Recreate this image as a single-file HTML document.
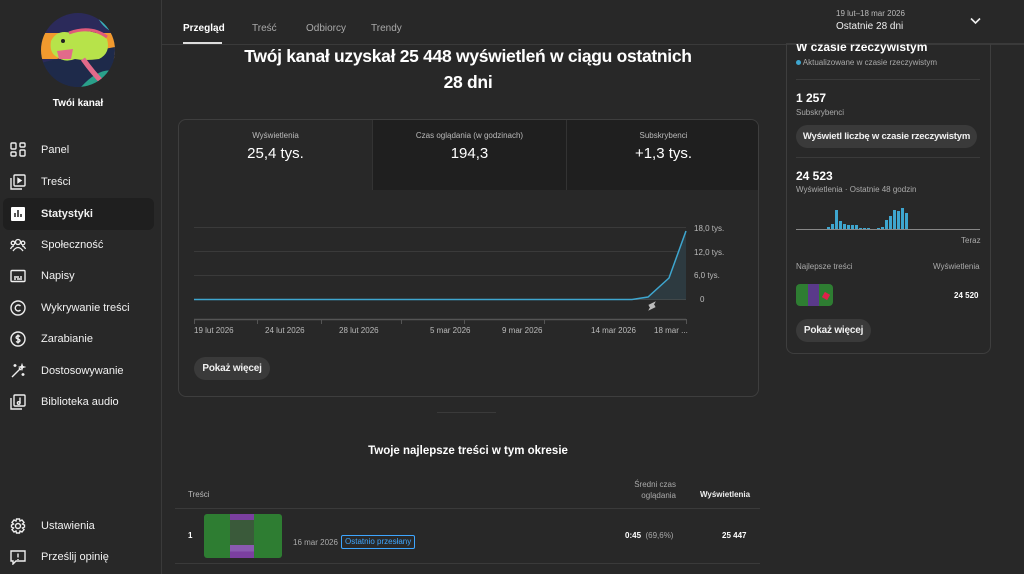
<!DOCTYPE html><html><head><meta charset="utf-8"><style>
*{margin:0;padding:0;box-sizing:border-box}
body{width:1024px;height:574px;background:#282828;font-family:"Liberation Sans",sans-serif;color:#fff;position:relative;overflow:hidden}
.a{position:absolute}
.side{left:0;top:0;width:162px;height:574px;border-right:1px solid #3a3a3a}
.nav{position:absolute;left:0;width:162px;height:32px;font-size:11px;color:#f1f1f1;display:flex;align-items:center}
.nav svg{position:absolute;left:10px;top:8px}
.nav span{position:absolute;left:41px;top:10px}
.sel{left:3px!important;width:151px!important;background:#1f1f1f;border-radius:6px}
.sel svg{left:7px}.sel span{left:38px;font-weight:bold}
.t{font-size:10px;color:#aaa}
.btn{background:#3a3a3a;border-radius:12px;font-size:10px;font-weight:bold;color:#f1f1f1;text-align:center;line-height:23px;height:23px;white-space:nowrap;letter-spacing:-0.2px}
</style></head><body>
<div class="a side">
<svg class="a" style="left:41px;top:13px" width="74" height="74" viewBox="0 0 74 74"><defs><clipPath id="c"><circle cx="37" cy="37" r="37"/></clipPath></defs><g clip-path="url(#c)"><rect width="74" height="74" fill="#2b2a5a"/><rect y="20" width="74" height="26" fill="#f29a2e"/><path d="M0 50 Q30 42 74 34 V74 H0z" fill="#1e2a4a"/><path d="M40 74 Q58 54 74 58 V74z" fill="#2aa08a"/><path d="M55 0 L74 0 V20 Q60 15 55 0" fill="#3ab0b8"/><path d="M10 28 Q16 16 30 20 Q50 14 66 26 Q70 40 58 46 Q44 48 34 46 Q24 50 16 44 Q8 40 10 28z" fill="#b7e34a"/><path d="M28 20 Q50 12 66 24" stroke="#e05a7a" stroke-width="3" fill="none"/><path d="M16 38 L32 36 L30 46 L18 46z" fill="#e26a8a"/><path d="M42 46 Q52 60 62 70" stroke="#e26a8a" stroke-width="5" fill="none"/><circle cx="22" cy="28" r="2" fill="#222"/></g></svg>
<div class="a" style="left:0;width:156px;top:98px;text-align:center;font-size:10px;font-weight:bold">Twói kanał</div>
<div class="nav" style="top:134px"><svg width="16" height="16" viewBox="0 0 16 16" fill="none" stroke="#eee" stroke-width="1.4"><rect x="1" y="1" width="5" height="6" rx="1"/><rect x="10" y="1" width="5" height="4" rx="1"/><rect x="1" y="10" width="5" height="4" rx="1"/><rect x="10" y="8" width="5" height="6" rx="1"/></svg><span>Panel</span></div>
<div class="nav" style="top:166px"><svg width="16" height="16" viewBox="0 0 16 16" fill="none" stroke="#eee" stroke-width="1.4"><rect x="4" y="1" width="11" height="11" rx="1"/><path d="M1 4v11h11"/><path d="M8 4.5v4l3-2z" fill="#eee"/></svg><span>Treści</span></div>
<div class="nav sel" style="top:198px"><svg width="16" height="16" viewBox="0 0 16 16"><rect x="1" y="1" width="14" height="14" rx="1" fill="#fff"/><path d="M5 11V7M8 11V4M11 11V8" stroke="#1f1f1f" stroke-width="1.5"/></svg><span>Statystyki</span></div>
<div class="nav" style="top:229px"><svg width="16" height="16" viewBox="0 0 16 16" fill="none" stroke="#eee" stroke-width="1.3"><circle cx="8" cy="5" r="2.5"/><circle cx="3" cy="6" r="1.8"/><circle cx="13" cy="6" r="1.8"/><path d="M3 14q5-7 10 0M0.5 12q1.5-3 3.5-3M15.5 12q-1.5-3-3.5-3"/></svg><span>Społeczność</span></div>
<div class="nav" style="top:260px"><svg width="16" height="16" viewBox="0 0 16 16" fill="none" stroke="#eee" stroke-width="1.4"><rect x="1" y="2.5" width="14" height="11" rx="1"/><path d="M4 9h5M10 9h2M4 11h2M7 11h5"/></svg><span>Napisy</span></div>
<div class="nav" style="top:292px"><svg width="16" height="16" viewBox="0 0 16 16" fill="none" stroke="#eee" stroke-width="1.4"><circle cx="8" cy="8" r="7"/><path d="M10.5 6a3 3 0 1 0 0 4"/></svg><span>Wykrywanie treści</span></div>
<div class="nav" style="top:323px"><svg width="16" height="16" viewBox="0 0 16 16" fill="none" stroke="#eee" stroke-width="1.4"><circle cx="8" cy="8" r="7"/><path d="M10 5.5Q8 4 6.5 5.5T8 8t1.5 2.5T6 10.5M8 3.5v9"/></svg><span>Zarabianie</span></div>
<div class="nav" style="top:355px"><svg width="16" height="16" viewBox="0 0 16 16" fill="none" stroke="#eee" stroke-width="1.4"><path d="M2 14l8-8M9 5l2 2"/><path d="M5 1v3M3.5 2.5h3M13 10v3M11.5 11.5h3M12 2l.5 1.5L14 4l-1.5.5L12 6l-.5-1.5L10 4l1.5-.5z"/></svg><span>Dostosowywanie</span></div>
<div class="nav" style="top:386px"><svg width="16" height="16" viewBox="0 0 16 16" fill="none" stroke="#eee" stroke-width="1.4"><rect x="4" y="1" width="11" height="11" rx="1"/><path d="M1 4v11h11"/><path d="M10 3.5v5.5" /><circle cx="8.7" cy="9" r="1.3"/></svg><span>Biblioteka audio</span></div>
<div class="nav" style="top:510px"><svg width="16" height="16" viewBox="0 0 16 16" fill="none" stroke="#eee" stroke-width="1.4"><circle cx="8" cy="8" r="2.5"/><path d="M6.5 1h3l.5 2 2-1 2 2.5-1.5 1.5 2 1v2l-2 1 1.5 1.5-2 2.5-2-1-.5 2h-3l-.5-2-2 1-2-2.5L3.5 10l-2-1V7l2-1L2 4.5 4 2l2 1z"/></svg><span>Ustawienia</span></div>
<div class="nav" style="top:541px"><svg width="16" height="16" viewBox="0 0 16 16" fill="none" stroke="#eee" stroke-width="1.4"><path d="M1 2h14v10H6l-3 3v-3H1z"/><path d="M8 4.5v4M8 10v1"/></svg><span>Prześlij opinię</span></div>
</div>
<!-- header -->
<div class="a" style="left:162px;top:44px;width:862px;height:1px;background:#3a3a3a"></div>
<div class="a" style="left:183px;top:23px;font-size:10px;font-weight:bold">Przegląd</div>
<div class="a" style="left:183px;top:42px;width:39px;height:2px;background:#ddd"></div>
<div class="a t" style="left:252px;top:23px">Treść</div>
<div class="a t" style="left:306px;top:23px">Odbiorcy</div>
<div class="a t" style="left:371px;top:23px">Trendy</div>
<div class="a" style="left:162px;width:612px;top:43px;text-align:center;font-size:17.5px;font-weight:bold;line-height:26px;letter-spacing:-0.3px">Twój kanał uzyskał 25 448 wyświetleń w ciągu ostatnich<br>28 dni</div>
<!-- main card -->
<div class="a" style="left:178px;top:119px;width:581px;height:278px;border:1px solid #3e3e3e;border-radius:8px;overflow:hidden">
<div class="a" style="left:0;top:0;width:193px;height:70px;text-align:center"><div style="font-size:8px;color:#bbb;margin-top:11px">Wyświetlenia</div><div style="font-size:15px;margin-top:5px">25,4 tys.</div></div>
<div class="a" style="left:193px;top:0;width:194px;height:70px;background:#1f1f1f;border-left:1px solid #333;text-align:center"><div style="font-size:8px;color:#bbb;margin-top:11px">Czas oglądania (w godzinach)</div><div style="font-size:15px;margin-top:5px">194,3</div></div>
<div class="a" style="left:387px;top:0;width:194px;height:70px;background:#1f1f1f;border-left:1px solid #333;text-align:center"><div style="font-size:8px;color:#bbb;margin-top:11px">Subskrybenci</div><div style="font-size:15px;margin-top:5px">+1,3 tys.</div></div>
<svg class="a" style="left:0;top:0" width="581" height="278"><g stroke="#3a3a3a"><path d="M15 107.5H507M15 131.5H507M15 155.5H507"/></g><path d="M15 179.5H507" stroke="#555"/><path d="M15 199.5H507" stroke="#555" stroke-width="1.5"/>
<g stroke="#555"><path d="M15.5 199v5M78.5 199v5M142.5 199v5M222.5 199v5M285.5 199v5M365.5 199v5M507.5 199v5"/></g>
<path d="M15 179.5H453L469 177L490 158L507 111V179.5z" fill="#2d3a40"/>
<path d="M15 179.5H453L469 177L490 158L507 111" stroke="#3ea6cf" stroke-width="1.5" fill="none"/>
<path d="M470 186l4-2-2 4 4-2" stroke="#bbb" stroke-width="2.5" fill="none"/>
<g font-size="8" fill="#bbb" font-family="Liberation Sans"><text x="515" y="111">18,0 tys.</text><text x="515" y="135">12,0 tys.</text><text x="515" y="158">6,0 tys.</text><text x="521" y="182">0</text>
<text x="15" y="213">19 lut 2026</text><text x="86" y="213">24 lut 2026</text><text x="160" y="213">28 lut 2026</text><text x="251" y="213">5 mar 2026</text><text x="323" y="213">9 mar 2026</text><text x="412" y="213">14 mar 2026</text><text x="475" y="213">18 mar ...</text></g></svg>
<div class="a btn" style="left:15px;top:237px;width:76px">Pokaż więcej</div>
</div>
<div class="a" style="left:437px;top:412px;width:59px;height:1px;background:#3a3a3a"></div>
<div class="a" style="left:162px;width:612px;top:445px;text-align:center;font-size:11.5px;font-weight:bold">Twoje najlepsze treści w tym okresie</div>
<div class="a" style="left:188px;top:490px;font-size:8px;color:#bbb">Treści</div>
<div class="a" style="left:600px;width:76px;top:479px;font-size:8px;color:#aaa;text-align:right;line-height:11px">Średni czas<br>oglądania</div>
<div class="a" style="left:700px;top:490px;font-size:8px;font-weight:bold;color:#eee">Wyświetlenia</div>
<div class="a" style="left:175px;top:508px;width:585px;height:1px;background:#3a3a3a"></div>
<div class="a" style="left:188px;top:531px;font-size:8px;font-weight:bold">1</div>
<div class="a" style="left:204px;top:514px;width:78px;height:44px;background:#2e7d32;border-radius:3px"><div style="position:absolute;left:26px;top:0;width:24px;height:44px;background:linear-gradient(#7b3fa0 0 14%,#3a5a3a 14% 70%,#8a5ab0 70% 85%,#7b3fa0 85%)"></div></div>
<div class="a" style="left:293px;top:538px;font-size:8px;color:#aaa">16 mar 2026</div>
<div class="a" style="left:341px;top:535px;height:14px;padding:0 3px;border:1px solid #3ea6ff;border-radius:2px;font-size:8px;color:#3ea6ff;line-height:12px">Ostatnio przesłany</div>
<div class="a" style="left:625px;top:531px;font-size:8px;font-weight:bold">0:45 <span style="font-weight:normal;color:#aaa">&nbsp;(69,6%)</span></div>
<div class="a" style="left:722px;top:531px;font-size:8px;font-weight:bold">25 447</div>
<div class="a" style="left:175px;top:563px;width:585px;height:1px;background:#3a3a3a"></div>
<!-- right card -->
<div class="a" style="left:786px;top:20px;width:205px;height:334px;border:1px solid #3e3e3e;border-top:none;border-radius:0 0 8px 8px"></div>
<div class="a" style="left:796px;top:40px;font-size:12px;font-weight:bold">W czasie rzeczywistym</div>
<div class="a" style="left:786px;top:0;width:238px;height:44px;background:#282828;border-bottom:1px solid #3a3a3a"></div>
<div class="a" style="left:836px;top:9px;font-size:8px;color:#bbb">19 lut–18 mar 2026</div>
<div class="a" style="left:836px;top:21px;font-size:10px;color:#eee">Ostatnie 28 dni</div>
<svg class="a" style="left:970px;top:17px" width="11" height="8"><path d="M1 1.5l4.5 4.5 4.5-4.5" stroke="#eee" stroke-width="1.6" fill="none"/></svg>
<div class="a" style="left:796px;top:58px;font-size:8px;color:#aaa"><span style="display:inline-block;width:5px;height:5px;border-radius:50%;background:#3ea6cf"></span> Aktualizowane w czasie rzeczywistym</div>
<div class="a" style="left:796px;top:79px;width:184px;height:1px;background:#3a3a3a"></div>
<div class="a" style="left:796px;top:91px;font-size:12px;font-weight:bold">1 257</div>
<div class="a" style="left:796px;top:108px;font-size:8px;color:#aaa">Subskrybenci</div>
<div class="a btn" style="left:796px;top:125px;width:181px;font-size:9.5px">Wyświetl liczbę w czasie rzeczywistym</div>
<div class="a" style="left:796px;top:157px;width:184px;height:1px;background:#3a3a3a"></div>
<div class="a" style="left:796px;top:169px;font-size:12px;font-weight:bold">24 523</div>
<div class="a" style="left:796px;top:185px;font-size:8px;color:#aaa">Wyświetlenia · Ostatnie 48 godzin</div>
<svg class="a" style="left:796px;top:200px" width="184" height="32"><g fill="#3ea6cf"><rect x="31" y="27" width="3" height="3"/><rect x="35" y="24" width="3" height="6"/><rect x="39" y="10" width="3" height="20"/><rect x="43" y="21" width="3" height="9"/><rect x="47" y="24" width="3" height="6"/><rect x="51" y="25" width="3" height="5"/><rect x="55" y="25" width="3" height="5"/><rect x="59" y="25" width="3" height="5"/><rect x="63" y="28" width="3" height="2"/><rect x="67" y="28" width="3" height="2"/><rect x="71" y="28" width="3" height="2"/><rect x="81" y="28" width="3" height="2"/><rect x="85" y="27" width="3" height="3"/><rect x="89" y="20" width="3" height="10"/><rect x="93" y="16" width="3" height="14"/><rect x="97" y="10" width="3" height="20"/><rect x="101" y="11" width="3" height="19"/><rect x="105" y="8" width="3" height="22"/><rect x="109" y="13" width="3" height="17"/></g><path d="M0 29.5H184" stroke="#888"/></svg>
<div class="a" style="left:961px;top:236px;font-size:8px;color:#aaa">Teraz</div>
<div class="a" style="left:796px;top:262px;font-size:8px;color:#aaa">Najlepsze treści</div>
<div class="a" style="left:933px;top:262px;font-size:8px;color:#aaa">Wyświetlenia</div>
<div class="a" style="left:796px;top:284px;width:37px;height:22px;background:#2e7d32;border-radius:4px"><div style="position:absolute;left:12px;width:11px;height:22px;background:#5a3a8a"></div><div style="position:absolute;left:27px;top:9px;width:6px;height:6px;background:#e0204a;transform:rotate(30deg)"></div></div>
<div class="a" style="left:954px;top:291px;font-size:8px;font-weight:bold">24 520</div>
<div class="a btn" style="left:796px;top:319px;width:75px">Pokaż więcej</div>
</body></html>
